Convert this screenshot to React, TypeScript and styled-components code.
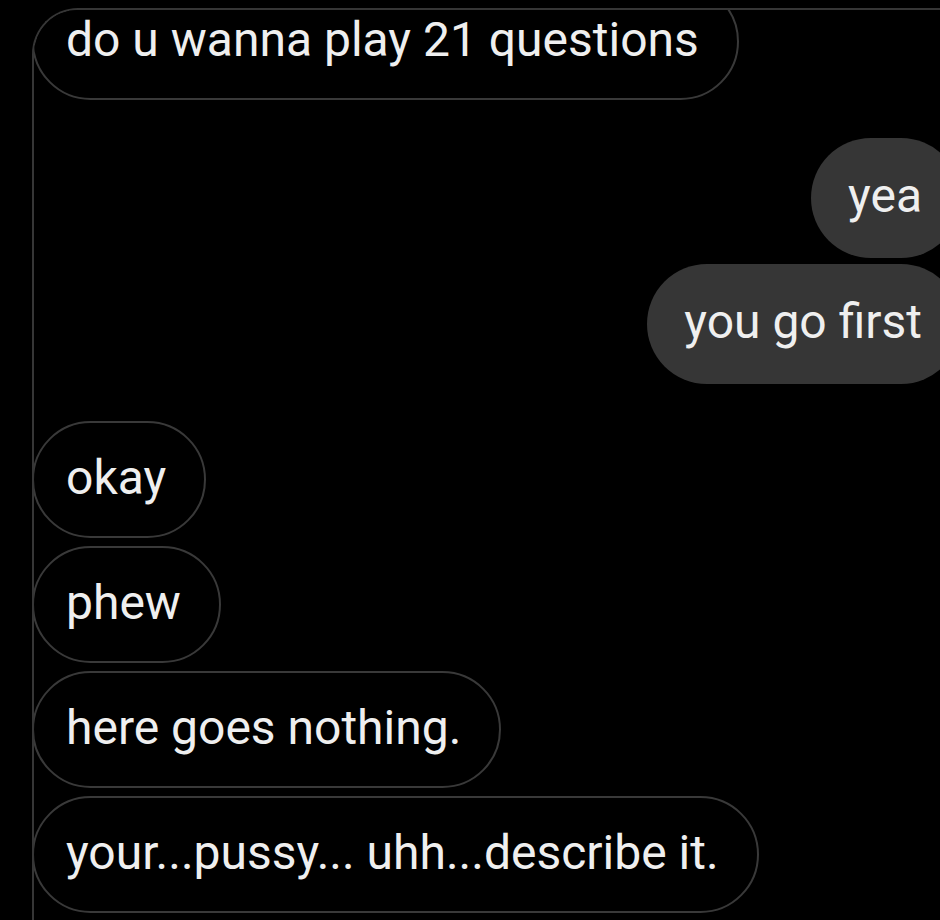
import React from "react";
import styled, { createGlobalStyle } from "styled-components";

const GlobalStyle = createGlobalStyle`
  html, body {
    margin: 0;
    padding: 0;
    background: #000;
    overflow: hidden;
  }
  body {
    width: 940px;
    height: 920px;
    font-family: Roboto, "Liberation Sans", Arial, sans-serif;
  }
`;

const Screen = styled.div`
  width: 940px;
  height: 920px;
  background: #000;
  overflow: hidden;
  padding: 8px 0 0 32px;
  box-sizing: border-box;
`;

const Thread = styled.div`
  width: 940px;
  height: 940px;
  box-sizing: border-box;
  border-top: 2px solid #363636;
  border-left: 2px solid #363636;
  border-top-left-radius: 46px;
  overflow: hidden;
  display: flex;
  flex-direction: column;
`;

const Row = styled.div<{ $mine?: boolean; $gap: number }>`
  display: flex;
  justify-content: ${(p) => (p.$mine ? "flex-end" : "flex-start")};
  margin-top: ${(p) => p.$gap}px;
`;

const Bubble = styled.div<{ $mine?: boolean }>`
  box-sizing: border-box;
  height: ${(p) => (p.$mine ? 120 : 117)}px;
  display: flex;
  align-items: center;
  border-radius: 60px;
  font-size: 48px;
  line-height: 1;
  color: #efefef;
  white-space: nowrap;
  ${(p) =>
    p.$mine
      ? `
    background: #363636;
    padding: 0 39px 4px 37px;
    margin-right: 11px;
  `
      : `
    background: #000;
    border: 2px solid #393939;
    padding: 0 38px 4px 32px;
    margin-left: -2px;
  `}
`;

type Msg = { text: string; mine?: boolean; gap: number };

const messages: Msg[] = [
  { text: "do u wanna play 21 questions", gap: -27 },
  { text: "yea", mine: true, gap: 38 },
  { text: "you go first", mine: true, gap: 6 },
  { text: "okay", gap: 37 },
  { text: "phew", gap: 8 },
  { text: "here goes nothing.", gap: 8 },
  { text: "your...pussy... uhh...describe it.", gap: 8 },
];

export default function App() {
  return (
    <>
      <GlobalStyle />
      <Screen>
        <Thread>
          {messages.map((m, i) => (
            <Row key={i} $mine={m.mine} $gap={m.gap}>
              <Bubble $mine={m.mine}>{m.text}</Bubble>
            </Row>
          ))}
        </Thread>
      </Screen>
    </>
  );
}
